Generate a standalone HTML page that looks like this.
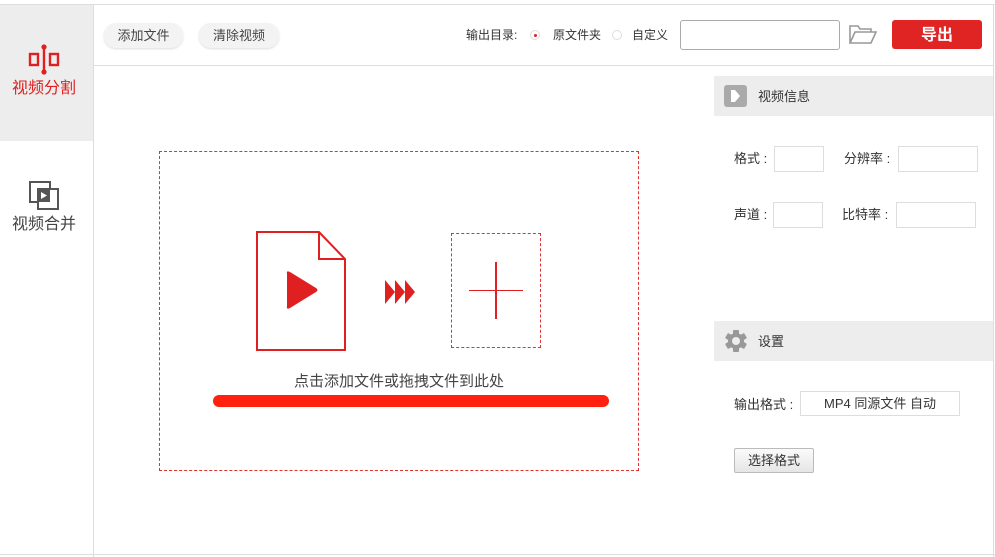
<!DOCTYPE html>
<html><head><meta charset="utf-8"><style>
*{margin:0;padding:0;box-sizing:border-box}
body{width:995px;height:557px;background:#fff;position:relative;overflow:hidden;font-family:"Liberation Sans","Noto Sans CJK SC",sans-serif;color:#333;font-size:13px}
.a{position:absolute}
.btn{position:absolute;top:23px;height:25px;border-radius:12px;background:#f3f3f3;box-shadow:0 1px 2px #ddd;font-size:13px;line-height:25px;text-align:center;color:#444}
.inp{position:absolute;border:1px solid #ddd;background:#fff}
.lbl{position:absolute;font-size:13px;color:#333;line-height:16px}
</style></head><body>
<div class="a" style="left:0;top:4px;width:995px;height:1px;background:#ddd"></div>
<div class="a" style="left:993px;top:4px;width:1px;height:553px;background:#ddd"></div>
<div class="a" style="left:93px;top:4px;width:1px;height:553px;background:#ddd"></div>
<div class="a" style="left:0;top:554px;width:995px;height:1px;background:#ddd"></div>
<div class="a" style="left:0;top:5px;width:93px;height:136px;background:#ededed"></div>
<svg class="a" style="left:28px;top:44px" width="32" height="32" viewBox="0 0 32 32"><rect x="2" y="10" width="8" height="11" fill="none" stroke="#e02020" stroke-width="2.4"/><rect x="22" y="10" width="8" height="11" fill="none" stroke="#e02020" stroke-width="2.4"/><line x1="16" y1="3" x2="16" y2="28" stroke="#e02020" stroke-width="2.4"/><circle cx="16" cy="3" r="2.6" fill="#e02020"/><circle cx="16" cy="28" r="2.6" fill="#e02020"/></svg>
<div class="a" style="left:0;top:79px;width:88px;text-align:center;font-size:16px;line-height:20px;color:#e02020">视频分割</div>
<svg class="a" style="left:28px;top:180px" width="32" height="32" viewBox="0 0 32 32"><rect x="2" y="2" width="20" height="20" fill="none" stroke="#555" stroke-width="2"/><rect x="10" y="9" width="20" height="20" fill="#fff" stroke="#555" stroke-width="2"/><rect x="10" y="9" width="12" height="13" fill="#555"/><path d="M13 12 L19 15.5 L13 19Z" fill="#fff"/></svg>
<div class="a" style="left:0;top:215px;width:88px;text-align:center;font-size:16px;line-height:20px;color:#444">视频合并</div>
<div class="btn" style="left:104px;width:79px">添加文件</div>
<div class="btn" style="left:199px;width:80px">清除视频</div>
<div class="a" style="left:94px;top:65px;width:899px;height:1px;background:#ddd"></div>
<div class="lbl" style="left:466px;top:27px;font-size:12px">输出目录:</div>
<div class="a" style="left:530px;top:30px;width:10px;height:10px;border:1px solid #ddd;border-radius:50%"></div>
<div class="a" style="left:534px;top:34px;width:3px;height:3px;background:#e02020;border-radius:50%"></div>
<div class="lbl" style="left:553px;top:27px;font-size:12px">原文件夹</div>
<div class="a" style="left:612px;top:30px;width:10px;height:10px;border:1px solid #ddd;border-radius:50%"></div>
<div class="lbl" style="left:632px;top:27px;font-size:12px">自定义</div>
<div class="a" style="left:680px;top:20px;width:160px;height:30px;border:1px solid #aaa;border-radius:3px"></div>
<svg class="a" style="left:849px;top:23px" width="28" height="22" viewBox="0 0 28 22"><path d="M1 20 V3 H9 L11 6 H22 V9 M1 20 L6 9 H27 L22 20 Z" fill="none" stroke="#999" stroke-width="1.6"/></svg>
<div class="a" style="left:892px;top:20px;width:90px;height:29px;background:#e02424;border-radius:3px;color:#fff;font-weight:bold;font-size:16px;text-align:center;line-height:31px">导出</div>
<div class="a" style="left:159px;top:151px;width:480px;height:320px;border:1px dashed #d33"></div>
<svg class="a" style="left:255px;top:230px" width="92" height="122" viewBox="0 0 92 122"><path d="M2 2 H64 L90 29 V120 H2 Z M64 2 V29 H90" fill="none" stroke="#e02020" stroke-width="2"/><path d="M32 44 Q31 40 35 42 L61 58 Q64 60 61 62 L35 78 Q31 80 32 76 Z" fill="#e02020"/></svg>
<svg class="a" style="left:385px;top:280px" width="32" height="24" viewBox="0 0 32 24"><path d="M0 0 L10 12 L0 24Z M10 0 L20 12 L10 24Z M20 0 L30 12 L20 24Z" fill="#e02020"/></svg>
<div class="a" style="left:451px;top:233px;width:90px;height:115px;border:1px dashed #d33"></div>
<div class="a" style="left:469px;top:290px;width:54px;height:1px;background:#e02020"></div>
<div class="a" style="left:495px;top:262px;width:2px;height:57px;background:#e02020"></div>
<div class="a" style="left:159px;top:372px;width:480px;text-align:center;font-size:15px;line-height:20px;color:#444">点击添加文件或拖拽文件到此处</div>
<div class="a" style="left:213px;top:395px;width:396px;height:12px;background:#ff2010;border-radius:6px"></div>
<div class="a" style="left:714px;top:76px;width:279px;height:40px;background:#ededed"></div>
<div class="a" style="left:724px;top:85px;width:23px;height:22px;background:#aaa;border-radius:3px"></div>
<svg class="a" style="left:730px;top:89px" width="12" height="14"><path d="M1 1 H5 L10 7 L5 13 H1Z" fill="#fff"/></svg>
<div class="lbl" style="left:758px;top:89px">视频信息</div>
<div class="lbl" style="left:734px;top:151px">格式 :</div>
<div class="inp" style="left:774px;top:146px;width:50px;height:26px"></div>
<div class="lbl" style="left:844px;top:151px">分辨率 :</div>
<div class="inp" style="left:898px;top:146px;width:80px;height:26px"></div>
<div class="lbl" style="left:734px;top:207px">声道 :</div>
<div class="inp" style="left:773px;top:202px;width:50px;height:26px"></div>
<div class="lbl" style="left:842px;top:207px">比特率 :</div>
<div class="inp" style="left:896px;top:202px;width:80px;height:26px"></div>
<div class="a" style="left:714px;top:321px;width:279px;height:40px;background:#ededed"></div>
<svg class="a" style="left:724px;top:329px" width="24" height="24" viewBox="0 0 24 24"><g fill="#999"><circle cx="12" cy="12" r="8"/><rect x="9" y="1" width="6" height="22" rx="1"/><rect x="9" y="1" width="6" height="22" rx="1" transform="rotate(60 12 12)"/><rect x="9" y="1" width="6" height="22" rx="1" transform="rotate(120 12 12)"/></g><circle cx="12" cy="12" r="4" fill="#ededed"/></svg>
<div class="lbl" style="left:758px;top:334px">设置</div>
<div class="lbl" style="left:734px;top:397px">输出格式 :</div>
<div class="inp" style="left:800px;top:391px;width:160px;height:25px;text-align:center;line-height:23px;font-size:13px">MP4 同源文件 自动</div>
<div class="a" style="left:734px;top:448px;width:80px;height:25px;border:1px solid #bbb;border-radius:2px;background:linear-gradient(#fafafa,#e6e6e6);text-align:center;line-height:23px;font-size:13px">选择格式</div>
</body></html>
